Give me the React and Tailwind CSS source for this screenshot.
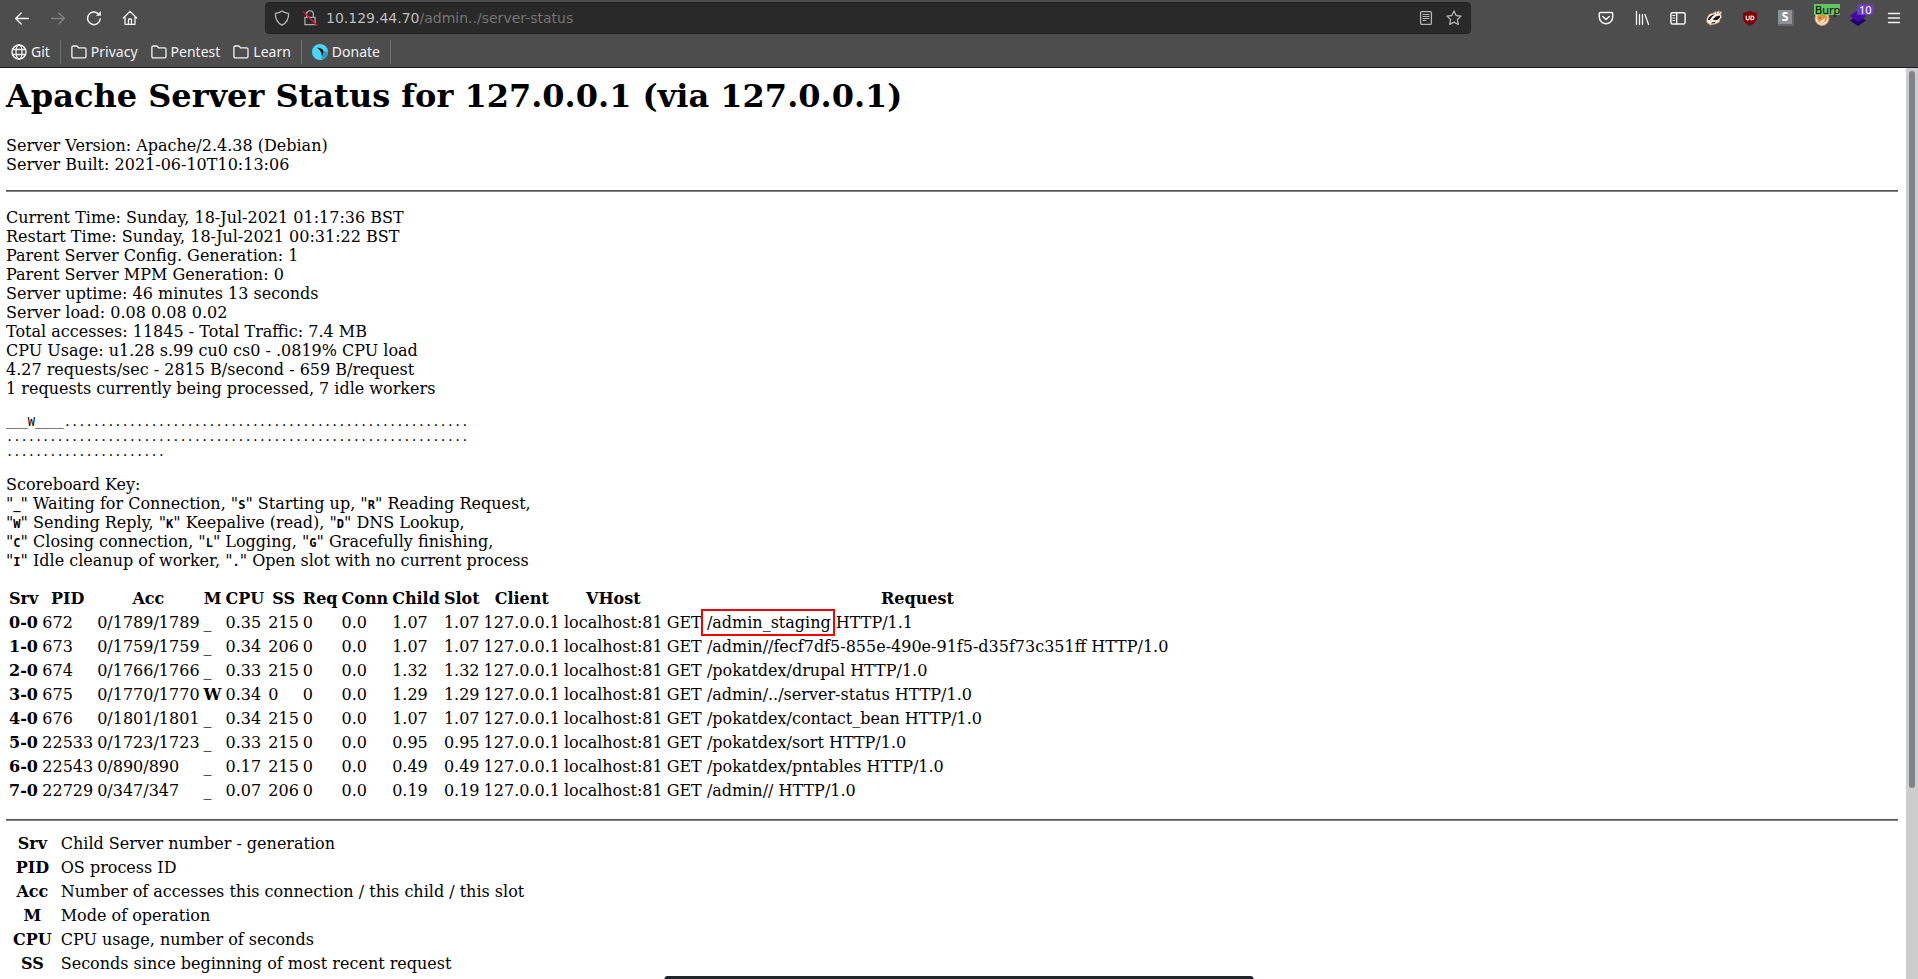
import React from "react";

const workers = [
  { srv: "0-0", pid: "672", acc: "0/1789/1789", m: "_", cpu: "0.35", ss: "215", child: "1.07", slot: "1.07", path: "/admin_staging", proto: "HTTP/1.1", marked: true },
  { srv: "1-0", pid: "673", acc: "0/1759/1759", m: "_", cpu: "0.34", ss: "206", child: "1.07", slot: "1.07", path: "/admin//fecf7df5-855e-490e-91f5-d35f73c351ff", proto: "HTTP/1.0" },
  { srv: "2-0", pid: "674", acc: "0/1766/1766", m: "_", cpu: "0.33", ss: "215", child: "1.32", slot: "1.32", path: "/pokatdex/drupal", proto: "HTTP/1.0" },
  { srv: "3-0", pid: "675", acc: "0/1770/1770", m: "W", cpu: "0.34", ss: "0", child: "1.29", slot: "1.29", path: "/admin/../server-status", proto: "HTTP/1.0" },
  { srv: "4-0", pid: "676", acc: "0/1801/1801", m: "_", cpu: "0.34", ss: "215", child: "1.07", slot: "1.07", path: "/pokatdex/contact_bean", proto: "HTTP/1.0" },
  { srv: "5-0", pid: "22533", acc: "0/1723/1723", m: "_", cpu: "0.33", ss: "215", child: "0.95", slot: "0.95", path: "/pokatdex/sort", proto: "HTTP/1.0" },
  { srv: "6-0", pid: "22543", acc: "0/890/890", m: "_", cpu: "0.17", ss: "215", child: "0.49", slot: "0.49", path: "/pokatdex/pntables", proto: "HTTP/1.0" },
  { srv: "7-0", pid: "22729", acc: "0/347/347", m: "_", cpu: "0.07", ss: "206", child: "0.19", slot: "0.19", path: "/admin//", proto: "HTTP/1.0" },
];

const columns = ["Srv", "PID", "Acc", "M", "CPU", "SS", "Req", "Conn", "Child", "Slot", "Client", "VHost", "Request"];

const legend = [
  ["Srv", "Child Server number - generation"],
  ["PID", "OS process ID"],
  ["Acc", "Number of accesses this connection / this child / this slot"],
  ["M", "Mode of operation"],
  ["CPU", "CPU usage, number of seconds"],
  ["SS", "Seconds since beginning of most recent request"],
];

const stats = [
  "Current Time: Sunday, 18-Jul-2021 01:17:36 BST",
  "Restart Time: Sunday, 18-Jul-2021 00:31:22 BST",
  "Parent Server Config. Generation: 1",
  "Parent Server MPM Generation: 0",
  "Server uptime: 46 minutes 13 seconds",
  "Server load: 0.08 0.08 0.02",
  "Total accesses: 11845 - Total Traffic: 7.4 MB",
  "CPU Usage: u1.28 s.99 cu0 cs0 - .0819% CPU load",
  "4.27 requests/sec - 2815 B/second - 659 B/request",
  "1 requests currently being processed, 7 idle workers",
];

const scoreboard = ["___W____" + ".".repeat(56), ".".repeat(64), ".".repeat(22)].join("\n");

const scoreKeys = [
  [["_", "Waiting for Connection"], ["S", "Starting up"], ["R", "Reading Request"]],
  [["W", "Sending Reply"], ["K", "Keepalive (read)"], ["D", "DNS Lookup"]],
  [["C", "Closing connection"], ["L", "Logging"], ["G", "Gracefully finishing"]],
  [["I", "Idle cleanup of worker"], [".", "Open slot with no current process"]],
];

// --- Toolbar icons ---
function Icon({ children, className = "" }) {
  return (
    <svg
      viewBox="0 0 16 16"
      className={`h-4 w-4 shrink-0 ${className}`}
      fill="none"
      stroke="currentColor"
      strokeWidth="1.3"
      strokeLinecap="round"
      strokeLinejoin="round"
      aria-hidden="true"
    >
      {children}
    </svg>
  );
}

const BackIcon = () => <Icon><path d="M14.5 8.5H1.8M7.2 3 1.6 8.5 7.2 14" /></Icon>;
const ForwardIcon = () => <Icon className="text-[#838383]"><path d="M1.5 8.5h12.7M8.8 3l5.6 5.5L8.8 14" /></Icon>;
const ReloadIcon = () => (
  <Icon>
    <path d="M14.2 9a6.3 6.3 0 1 1-1.9-5.2" strokeWidth="1.5" />
    <path d="M14.8.9v4.9H9.9z" fill="currentColor" stroke="none" />
  </Icon>
);
const HomeIcon = () => (
  <Icon>
    <path d="M1.3 8 8 1.4 14.7 8M3 7v7.3h10V7" />
    <path d="M6.5 14.2V9.8c0-.5.3-.8.8-.8h1.4c.5 0 .8.3.8.8v4.4" />
  </Icon>
);
const ShieldIcon = () => (
  <Icon className="text-[#b4b4b4]">
    <path d="M8 .9c2 1.5 4.300 2.200 6.600 2.400.2 5-1.500 9.300-6.600 11.900C2.900 12.600 1.200 8.300 1.400 3.300 3.700 3.100 6 2.400 8 .9z" />
  </Icon>
);
const LockIcon = () => (
  <Icon>
    <path className="text-[#a8a8a8]" stroke="currentColor" d="M4.600 7V4.200a3.400 3.400 0 0 1 6.800 0V7M2.900 7.300h10.200v7.400H2.900z" />
    <path d="m1.500 2 13 13" stroke="#e8113f" strokeWidth="1.5" />
  </Icon>
);
const ReaderIcon = () => (
  <Icon className="text-[#b4b4b4]">
    <rect x="2.6" y="1.6" width="10.8" height="12.8" rx="1.2" />
    <path d="M5 4.500h6M5 6.500h6M5 8.500h6M5 10.500h3" strokeWidth="1" />
  </Icon>
);
const StarIcon = () => (
  <Icon className="text-[#b4b4b4]">
    <path d="m8 1 2.100 4.500 4.900.6-3.600 3.400.9 5L8 12.100l-4.300 2.400.9-5L1 6.100l4.900-.6z" />
  </Icon>
);
const PocketIcon = () => (
  <Icon>
    <path d="M2.300 2.600h11.400c.6 0 1 .4 1 1v3.500a6.700 6.700 0 0 1-13.400 0V3.600c0-.6.4-1 1-1z" strokeWidth="1.5" />
    <path d="M4.800 6.500 8 9.500l3.200-3" strokeWidth="1.6" />
  </Icon>
);
const LibraryIcon = () => (
  <Icon>
    <path d="M2.500 1.500v13M5.500 4.500v10M8.500 4.500v10M11 4.500l3.500 10" />
  </Icon>
);
const SidebarIcon = () => (
  <Icon>
    <rect x=".9" y="2.7" width="14.2" height="11.2" rx="1.4" strokeWidth="1.5" />
    <path d="M6.700 2.700v11.200" strokeWidth="1.4" />
    <path d="M2.800 5.500h2M2.800 8h2M2.800 10.500h2" strokeWidth="1" />
  </Icon>
);
const BadgerIcon = () => (
  <Icon>
    <path d="M.6 11.500 1 8l2-3.500 2.500-1L8 3l1-1.500 2 .5 2-1.200.5 1.200 2-.3-.7 2.800.9 3-1.700 1.500-.5 3L9.500 14l-5 1-2.500-1.500z" fill="#f4eee6" stroke="#d98a4a" strokeWidth=".7" />
    <path d="M1.800 9.500C3 6.500 5.500 4.500 9 4.500L6.500 6.200 3.500 10zM6.500 9.500l3.500-3L13.700 5.500l.4 1.800-2.600 2.400-2 .6zM4.500 13.500l2-1.300 3.500-.4-1.500 1.500z" fill="#161616" stroke="none" />
    <path d="m9.500 2.500 1.500.2-.5 1.300zM13 2l1 .2-.5 1.300z" fill="#333" stroke="none" />
  </Icon>
);
const UblockIcon = () => (
  <Icon>
    <path d="M8 .8c2 1.300 4.300 1.900 6.900 2v4.700c0 3.800-2.900 6.400-6.900 8.200-4-1.800-6.900-4.400-6.900-8.200V2.800C3.700 2.700 6 2.100 8 .8z" fill="#800000" stroke="none" />
    <path d="M4.200 6v2.400c0 1.900 3 1.900 3 0V6" stroke="#fff" strokeWidth="1.1" />
    <path d="M9 6v3.700h.8c2.800 0 2.800-3.700 0-3.700z" stroke="#fff" strokeWidth="1.1" />
  </Icon>
);
const FoxIcon = () => (
  <Icon>
    <circle cx="8" cy="8.500" r="7" fill="#efe5da" stroke="#d9925c" strokeWidth="1" />
    <path d="M2.500 7c1-2 3-3.500 5.500-3.500S13 5 13.500 7.500l-1.500 4-4 2-3.500-1.500z" fill="#e8913c" stroke="none" />
    <path d="m5.500 11.500 3-1.500 2.500-2-.5 3-2.500 2z" fill="#fff3e4" stroke="none" />
    <circle cx="6" cy="8" r=".7" fill="#5a3312" stroke="none" />
  </Icon>
);
const LayersIcon = () => (
  <Icon>
    <path d="m8 5.500 8 5L8 16l-8-5.500z" fill="#1e006d" stroke="none" />
    <path d="m8 0 8 6-8 6-8-6z" fill="#4608ad" stroke="none" />
  </Icon>
);
const MenuIcon = () => <Icon><path d="M2.500 3.500h11M2.500 8h11M2.500 12.500h11" strokeWidth="1.4" /></Icon>;
const GlobeIcon = () => (
  <Icon>
    <circle cx="8" cy="8" r="7" strokeWidth="1.5" />
    <ellipse cx="8" cy="8" rx="3" ry="7" />
    <path d="M1.500 5.500h13M1.500 10.500h13" />
  </Icon>
);
const FolderIcon = () => (
  <Icon>
    <path d="M.9 12.600V3.300c0-.8.5-1.300 1.300-1.300h3.300c.5 0 .8.200 1.100.6l.9 1.200h6.200c.8 0 1.300.5 1.300 1.300v7.500c0 .8-.5 1.300-1.300 1.300H2.200c-.8 0-1.300-.5-1.300-1.300z" />
  </Icon>
);
const ParrotIcon = () => (
  <Icon>
    <circle cx="8" cy="8" r="8" fill="#4bd5f9" stroke="none" />
    <path d="M10 6.500 16 8a8 8 0 0 1-6.500 7.800z" fill="#2b9fbd" stroke="none" />
    <path d="M4.500 3.800c4-.3 7 1.700 6.800 4.200-.1 1.500-.8 2.500-1.300 4.200C9.700 10 9.300 8.800 8.700 7.500 7.700 5.500 6.200 4.500 4.500 3.800z" fill="#0c0c0c" stroke="none" />
  </Icon>
);

function ToolButton({ label, children }) {
  return (
    <button type="button" aria-label={label} className="relative flex h-9 w-9 items-center justify-center">
      {children}
    </button>
  );
}

function Bookmark({ icon, label }) {
  return (
    <a href="#" className="flex items-center gap-1">
      {icon}
      <span>{label}</span>
    </a>
  );
}

const Divider = () => <div className="h-6 w-px bg-[#727272]" />;

function BrowserChrome() {
  return (
    <header className="shrink-0 border-b border-[#1c1b22] bg-[#4d4d4d] font-['Noto_Sans','DejaVu_Sans',sans-serif] text-[#f2f2f2]">
      <div className="flex h-9 items-center pr-1.5 pl-1">
        <ToolButton label="Back"><BackIcon /></ToolButton>
        <ToolButton label="Forward"><ForwardIcon /></ToolButton>
        <ToolButton label="Reload"><ReloadIcon /></ToolButton>
        <ToolButton label="Home"><HomeIcon /></ToolButton>

        <div className="mx-[117px] flex h-8 flex-1 items-center rounded border border-[#232323] bg-[#292929] px-2">
          <ShieldIcon />
          <div className="ml-3"><LockIcon /></div>
          <a href="#" className="ml-2 flex-1 font-['DejaVu_Sans',sans-serif] text-sm text-[#747474]">
            <span className="text-[#bdbdbd]">10.129.44.70</span>/admin../server-status
          </a>
          <button type="button" aria-label="Reader view" className="mr-3"><ReaderIcon /></button>
          <button type="button" aria-label="Bookmark this page"><StarIcon /></button>
        </div>

        <ToolButton label="Pocket"><PocketIcon /></ToolButton>
        <ToolButton label="Library"><LibraryIcon /></ToolButton>
        <ToolButton label="Sidebars"><SidebarIcon /></ToolButton>
        <ToolButton label="Privacy Badger"><BadgerIcon /></ToolButton>
        <ToolButton label="uBlock Origin"><UblockIcon /></ToolButton>
        <ToolButton label="Scripts">
          <span className="flex h-4 w-4 items-center justify-center border-r-2 border-b-2 border-[#62666c] bg-[#8d9095] text-xs font-bold text-white">S</span>
        </ToolButton>
        <ToolButton label="FoxyProxy">
          <FoxIcon />
          <span className="absolute top-1 left-2.5 h-[11px] bg-[#60c760] pl-px text-left text-[11px] leading-[11px] text-black">Burp</span>
        </ToolButton>
        <ToolButton label="Wappalyzer">
          <LayersIcon />
          <span className="absolute top-1 left-[17px] h-[11px] rounded-xs bg-[#6b3cc0] px-0.5 text-[11px] leading-[11px] text-white">10</span>
        </ToolButton>
        <ToolButton label="Menu"><MenuIcon /></ToolButton>
      </div>

      <nav className="flex h-[31px] items-center gap-[10px] px-[11px] text-sm">
        <Bookmark icon={<GlobeIcon />} label="Git" />
        <Divider />
        <div className="flex gap-[13px]">
          <Bookmark icon={<FolderIcon />} label="Privacy" />
          <Bookmark icon={<FolderIcon />} label="Pentest" />
          <Bookmark icon={<FolderIcon />} label="Learn" />
        </div>
        <Divider />
        <Bookmark icon={<ParrotIcon />} label="Donate" />
        <Divider />
      </nav>
    </header>
  );
}

function Rule() {
  return <hr className="h-0.5 border-t border-b border-t-[#555555] border-b-[#858585]" />;
}

function WorkersTable() {
  return (
    <table className="border-separate border-spacing-0.5 leading-5 whitespace-nowrap">
      <thead>
        <tr>
          {columns.map((c) => (
            <th key={c} scope="col" className="p-px font-bold">{c}</th>
          ))}
        </tr>
      </thead>
      <tbody>
        {workers.map((w) => (
          <tr key={w.srv}>
            <td className="p-px font-bold">{w.srv}</td>
            <td className="p-px">{w.pid}</td>
            <td className="p-px">{w.acc}</td>
            <td className={w.m === "W" ? "p-px font-bold" : "p-px"}>{w.m}</td>
            <td className="p-px">{w.cpu}</td>
            <td className="p-px">{w.ss}</td>
            <td className="p-px">0</td>
            <td className="p-px">0.0</td>
            <td className="p-px">{w.child}</td>
            <td className="p-px">{w.slot}</td>
            <td className="p-px">127.0.0.1</td>
            <td className="p-px">localhost:81</td>
            <td className="p-px">
              GET{" "}
              <span className={w.marked ? "-ml-0.5 pl-0.5 outline-2 outline-offset-2 outline-[#f80000]" : ""}>{w.path}</span>{" "}
              {w.proto}
            </td>
          </tr>
        ))}
      </tbody>
    </table>
  );
}

export default function App() {
  return (
    <div className="flex h-screen flex-col overflow-hidden bg-white">
      <BrowserChrome />

      <div className="flex min-h-0 flex-1">
        <main className="min-w-0 flex-1 overflow-hidden pt-2.5 pr-2 pl-1.5 font-['DejaVu_Serif',serif] text-base leading-[19px] text-black">
          <h1 className="text-[32px] leading-[37px] font-bold">Apache Server Status for 127.0.0.1 (via 127.0.0.1)</h1>

          <dl className="mt-[21px] mb-4">
            <dt>Server Version: Apache/2.4.38 (Debian)</dt>
            <dt>Server Built: 2021-06-10T10:13:06</dt>
          </dl>
          <Rule />
          <dl className="mt-4">
            {stats.map((s) => (
              <dt key={s}>{s}</dt>
            ))}
          </dl>

          <pre className="mt-[17px] mb-[15px] font-['DejaVu_Sans_Mono',monospace] text-xs leading-[15px]">{scoreboard}</pre>

          <p className="mb-4">
            Scoreboard Key:
            {scoreKeys.map((line, i) => (
              <React.Fragment key={i}>
                <br />
                {line.map(([key, text], j) => (
                  <React.Fragment key={key}>
                    "<b className="font-['DejaVu_Sans_Mono',monospace] text-xs leading-none"><code className="font-[inherit]">{key}</code></b>" {text}
                    {j < line.length - 1 ? ", " : i < scoreKeys.length - 1 ? "," : ""}
                  </React.Fragment>
                ))}
              </React.Fragment>
            ))}
          </p>

          <WorkersTable />
          <div className="mt-[15px] mb-2.5"><Rule /></div>

          <table className="border-separate border-spacing-0.5 leading-5">
            <tbody>
              {legend.map(([key, text]) => (
                <tr key={key}>
                  <th scope="row" className="py-px pr-[3px] pl-[5px] font-bold">{key}</th>
                  <td className="px-1 py-px">{text}</td>
                </tr>
              ))}
            </tbody>
          </table>
        </main>

        {/* Scrollbar */}
        <div className="w-3 shrink-0 bg-[#cdcdcd] px-[3px] pt-[3px]">
          <div className="h-[79%] rounded-full bg-[#7f8484]" />
        </div>
      </div>

      {/* Dock edge */}
      <div className="fixed bottom-0 left-1/2 h-[3px] w-[589px] -translate-x-1/2 rounded-t bg-[#20242b]" />
    </div>
  );
}
